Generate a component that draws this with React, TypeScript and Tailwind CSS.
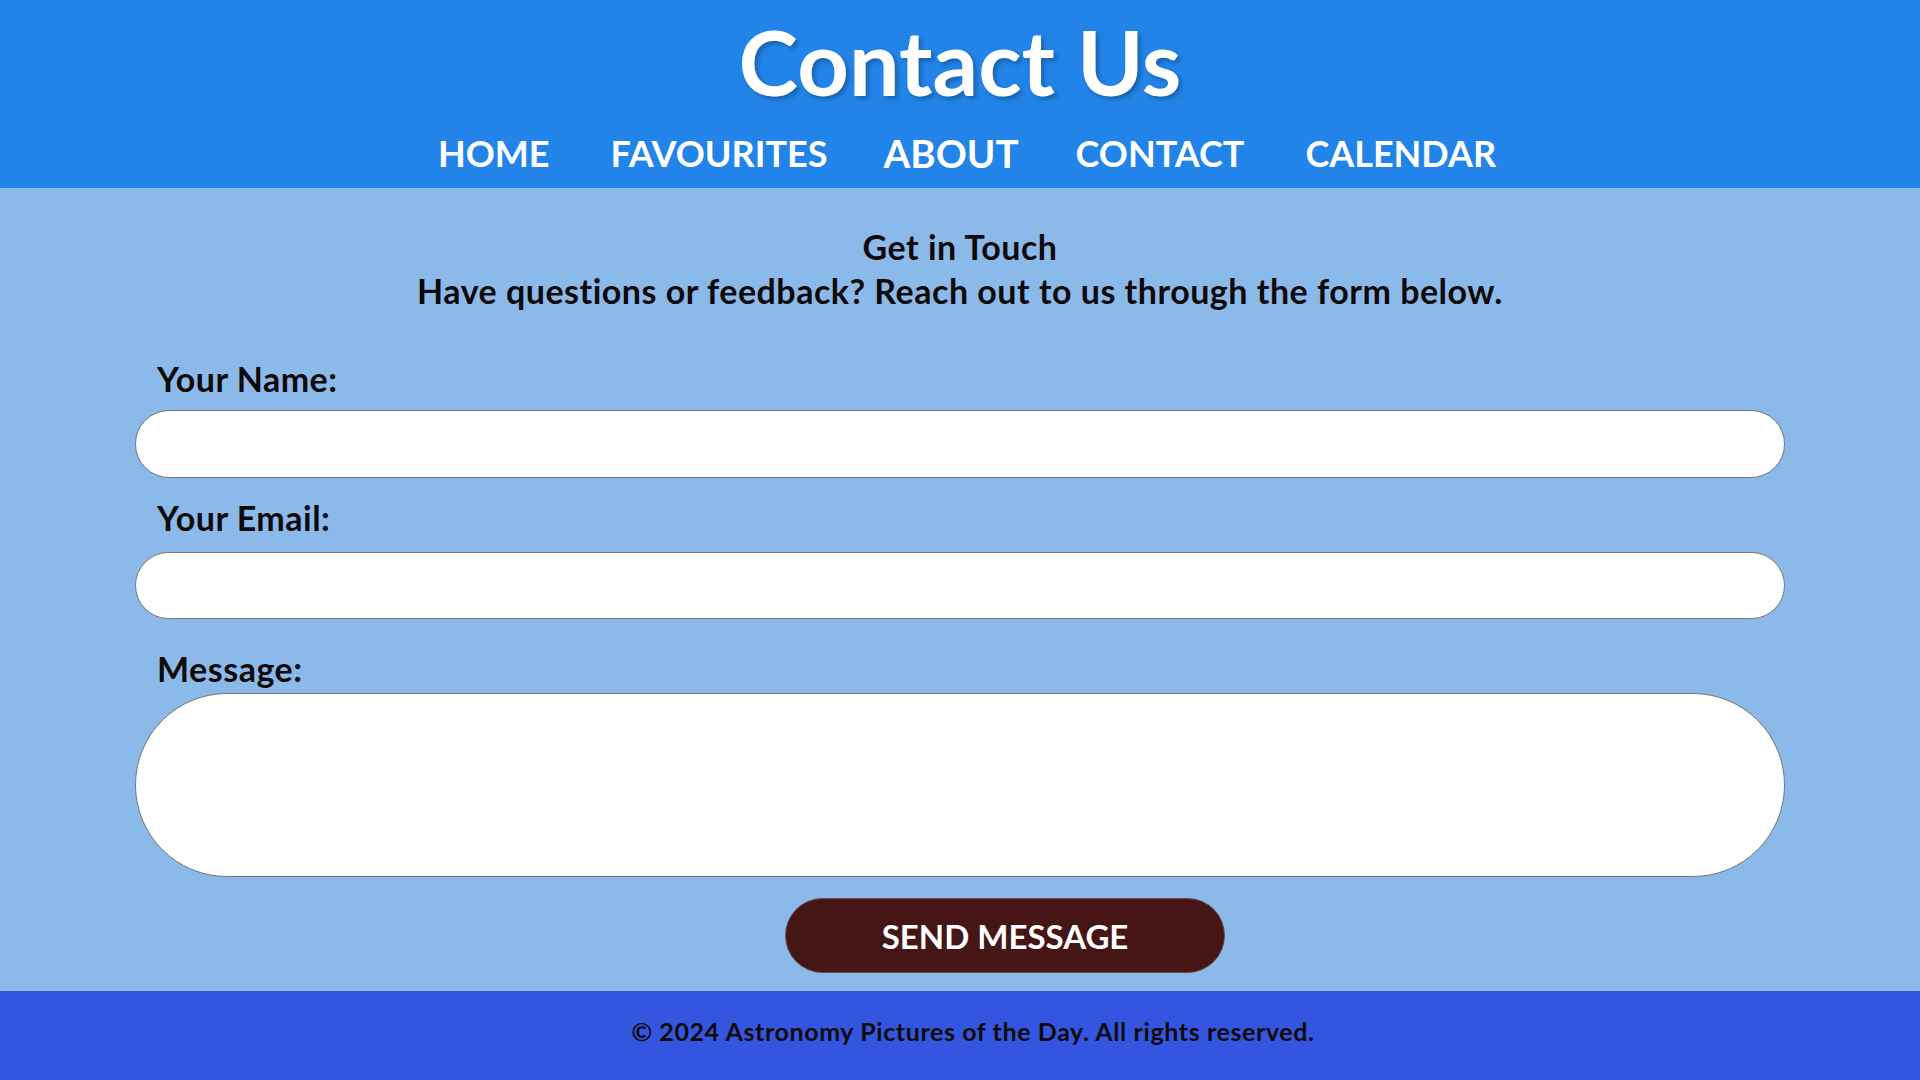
import React from "react";

const links = ["HOME", "FAVOURITES", "ABOUT", "CONTACT", "CALENDAR"];

export default function App() {
  return (
    <div className="min-h-screen flex flex-col font-['Lato',sans-serif] font-bold">
      {/* Header */}
      <header className="h-[188px] bg-[#2284e8] flex flex-col items-center text-white">
        <h1 className="mt-[11px] text-[90px] leading-[100px] [text-shadow:3px_3px_4px_rgba(0,0,0,0.25)]">
          Contact Us
        </h1>
        <nav className="mt-[19px] pl-[14px] flex gap-[61px] text-[36px] leading-[46px]">
          {links.map((l) => (
            <a key={l} href="#" className={l === "ABOUT" ? "scale-[1.07]" : ""}>
              {l}
            </a>
          ))}
        </nav>
      </header>

      {/* Main */}
      <main className="flex-1 bg-[#8bb9ea] text-[#0f0a0a] pt-[37px]">
        <div className="text-center text-[34px] leading-[44px] tracking-[0.5px]">
          <h2>Get in Touch</h2>
          <p>Have questions or feedback? Reach out to us through the form below.</p>
        </div>

        <form className="mt-[46px] mx-[135px] flex flex-col">
          <label className="pl-[22px] text-[34px] leading-[40px] tracking-[0.5px]">Your Name:</label>
          <input
            type="text"
            className="mt-[11px] h-[68px] rounded-full border border-[#767676] bg-white px-6 outline-none"
          />
          <label className="mt-[20px] pl-[22px] text-[34px] leading-[40px] tracking-[0.5px]">Your Email:</label>
          <input
            type="email"
            className="mt-[14px] h-[67px] rounded-full border border-[#767676] bg-white px-6 outline-none"
          />
          <label className="mt-[30px] pl-[22px] text-[34px] leading-[40px] tracking-[0.5px]">Message:</label>
          <textarea className="mt-[4px] h-[184px] rounded-full border border-[#767676] bg-white px-10 py-6 outline-none resize-none" />
          <div className="mt-[21px] flex justify-center">
            <button
              type="button"
              className="h-[75px] w-[440px] rounded-full border border-[#6b4a4a] bg-[#461616] text-white text-[33px] pt-[3px] translate-x-[45px]"
            >
              SEND MESSAGE
            </button>
          </div>
        </form>
      </main>

      {/* Footer */}
      <footer className="h-[89px] bg-[#3355e0] flex items-center justify-center pl-[26px] pb-[8px] text-[#0f0a0a] text-[25px] tracking-[0.6px]">
        © 2024 Astronomy Pictures of the Day. All rights reserved.
      </footer>
    </div>
  );
}
